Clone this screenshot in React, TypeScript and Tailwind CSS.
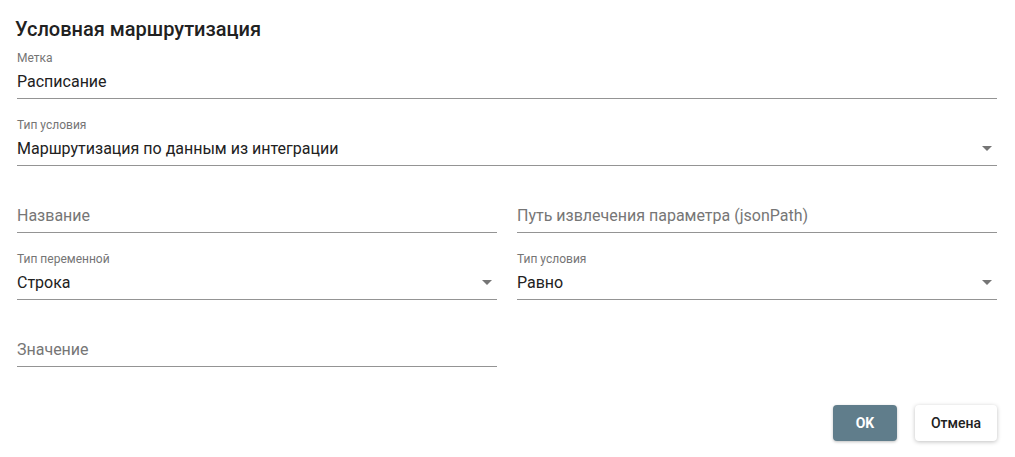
import React from 'react';

type FieldProps = {
  label?: string;
  value?: string;
  placeholder?: string;
  select?: boolean;
};

const Arrow = () => (
  <svg viewBox="0 0 24 24" className="absolute right-[-2px] top-[-3px] w-6 h-6 fill-[#757575]">
    <path d="M7 10l5 5 5-5z" />
  </svg>
);

const Field: React.FC<FieldProps> = ({ label, value, placeholder, select }) => (
  <div className="flex flex-col border-b border-[#949494]">
    <div className="h-[14px] text-[12px] leading-[14px] text-[#757575]">{label}</div>
    <div className="relative mt-[7px] mb-[7px] h-[19px] text-[16px] leading-[19px]">
      {value ? <span className="text-[#212121]">{value}</span> : <span className="text-[#767676]">{placeholder}</span>}
      {select && <Arrow />}
    </div>
  </div>
);

const App: React.FC = () => {
  return (
    <div className="w-[1015px] h-[457px] bg-white px-[17px] pt-[17px] font-['Roboto',sans-serif] text-[#212121]">
      <h2 className="text-[20px] leading-[24px] font-medium ml-[-2px] mb-[10px]">Условная маршрутизация</h2>
      <div className="w-[980px] flex flex-col gap-[19px]">
        <Field label="Метка" value="Расписание" />
        <Field label="Тип условия" value="Маршрутизация по данным из интеграции" select />
        <div className="grid grid-cols-2 gap-x-[20px] gap-y-[19px]">
          <Field placeholder="Название" />
          <Field placeholder="Путь извлечения параметра (jsonPath)" />
          <Field label="Тип переменной" value="Строка" select />
          <Field label="Тип условия" value="Равно" select />
          <Field placeholder="Значение" />
        </div>
      </div>
      <div className="w-[980px] flex justify-end gap-[18px] mt-[38px]">
        <button className="w-[64px] h-[36px] rounded-[4px] bg-[#607d8b] text-white text-[14px] font-bold shadow-[0_1px_3px_rgba(0,0,0,0.25)]">OK</button>
        <button className="w-[82px] h-[36px] rounded-[4px] bg-white text-[#212121] text-[14px] font-medium shadow-[0_1px_4px_rgba(0,0,0,0.25)]">Отмена</button>
      </div>
    </div>
  );
};

export default App;
